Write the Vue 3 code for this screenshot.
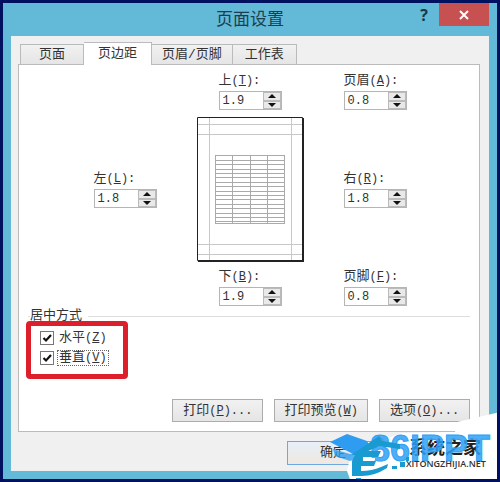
<script setup>
import { reactive, ref } from 'vue'

const tabs = ['页面', '页边距', '页眉/页脚', '工作表']
const activeTab = ref('页边距')

const margins = reactive([
  { id: 'top', name: '上', key: 'T', value: '1.9' },
  { id: 'header', name: '页眉', key: 'A', value: '0.8' },
  { id: 'left', name: '左', key: 'L', value: '1.8' },
  { id: 'right', name: '右', key: 'R', value: '1.8' },
  { id: 'bottom', name: '下', key: 'B', value: '1.9' },
  { id: 'footer', name: '页脚', key: 'F', value: '0.8' },
])

const centering = reactive([
  { id: 'horizontal', name: '水平', key: 'Z', checked: true, focused: false },
  { id: 'vertical', name: '垂直', key: 'V', checked: true, focused: true },
])

const actions = [
  { name: '打印', key: 'P', dots: '...' },
  { name: '打印预览', key: 'W', dots: '' },
  { name: '选项', key: 'O', dots: '...' },
]

function step(field, amount) {
  field.value = Math.max(0, Number(field.value) + amount).toFixed(1)
}
</script>

<template>
  <div class="window">
    <header class="title-bar">
      <h1 class="title">页面设置</h1>
      <button type="button" class="help" aria-label="帮助">?</button>
      <button type="button" class="close" aria-label="关闭">
        <svg width="12" height="12" viewBox="0 0 12 12" aria-hidden="true">
          <path d="M2 2 L10 10 M10 2 L2 10" stroke="#fff" stroke-width="2" />
        </svg>
      </button>
    </header>

    <main class="dialog">
      <nav class="tabs" role="tablist">
        <button
          v-for="tab in tabs"
          :key="tab"
          type="button"
          role="tab"
          class="tab"
          :class="{ 'tab--active': tab === activeTab }"
          :aria-selected="tab === activeTab"
          @click="activeTab = tab"
        >
          {{ tab }}
        </button>
      </nav>

      <section class="panel">
        <div class="margins">
          <div v-for="field in margins" :key="field.id" class="field" :class="`field--${field.id}`">
            <label class="field__label" :for="field.id">
              {{ field.name }}<span class="latin">(<u>{{ field.key }}</u>):</span>
            </label>
            <div class="spinner">
              <input :id="field.id" v-model="field.value" class="spinner__input" type="text" />
              <div class="spinner__buttons">
                <button type="button" class="spinner__button" aria-label="增加" @click="step(field, 0.1)">
                  <svg width="8" height="4" viewBox="0 0 8 4"><path d="M4 0 L8 4 H0 Z" /></svg>
                </button>
                <button type="button" class="spinner__button" aria-label="减少" @click="step(field, -0.1)">
                  <svg width="8" height="4" viewBox="0 0 8 4"><path d="M0 0 H8 L4 4 Z" /></svg>
                </button>
              </div>
            </div>
          </div>

          <!-- Page preview: paper, margin guides, sample table -->
          <svg class="preview" width="107" height="145" viewBox="0 0 107 145" aria-hidden="true">
            <path d="M0 0 H106 V144 H0 Z" fill="#fff" />
            <path
              d="M1 7.5 H105 M1 17.5 H105 M1 127.5 H105 M1 137.5 H105 M12.5 1 V143 M94.5 1 V143"
              stroke="#c8c8c8"
              fill="none"
            />
            <path d="M0.5 0.5 H105.5 V143.5 H0.5 Z" fill="none" stroke="#222" />
            <path d="M106 1 V144 H1" fill="none" stroke="#222" stroke-width="2" />
            <g fill="none" stroke="#aaa">
              <path v-for="n in 16" :key="n" :d="`M18 ${Math.round(34 + n * 4.4) + 0.5} H87`" />
              <path d="M18.5 38 V106 M35.5 38 V106 M53.5 38 V106 M70.5 38 V106 M87.5 38 V106 M18 106.5 H88" />
            </g>
          </svg>
        </div>

        <fieldset class="centering">
          <legend class="centering__title">居中方式</legend>
          <div class="centering__options">
            <label v-for="option in centering" :key="option.id" class="check">
              <input v-model="option.checked" class="check__box" type="checkbox" />
              <span class="check__text" :class="{ 'check__text--focused': option.focused }">
                {{ option.name }}<span class="latin">(<u>{{ option.key }}</u>)</span>
              </span>
            </label>
          </div>
        </fieldset>

        <div class="actions">
          <button v-for="action in actions" :key="action.key" type="button" class="action">
            {{ action.name }}<span class="latin">(<u>{{ action.key }}</u>){{ action.dots }}</span>
          </button>
        </div>
      </section>

      <footer class="footer">
        <button type="button" class="ok">确定</button>
      </footer>
    </main>

    <!-- Site watermark in the corner -->
    <svg class="watermark" width="175" height="75" viewBox="0 0 175 75" aria-hidden="true">
      <path d="M175 5 L132 15 L130 25 L76 26 L26 46 L22 64 L26 75 H175 Z" fill="#fff" />
      <text x="84" y="47" class="watermark__name">系统之家</text>
      <text x="45" y="54" class="watermark__brand">86IPPT</text>
      <text x="81" y="60" class="watermark__url">XITONGZHIJIA.NET</text>
      <g fill="#2e9cf0">
        <path d="M5 35 L22 27 L42 34 L46 41 L28 47 Z" />
        <path d="M8 42 L25 47 L42 42 L40 49 L25 54 L10 49 Z" opacity="0.8" />
      </g>
      <g fill="#199bd1">
        <path d="M25 49 L54 29 L58 34 L75 37 V42 L54 39 L35 48 H26 Z" />
        <path d="M32 44 H56 L53 50 H38 V54 H51 L49 59 H36 V64 Q47 64 56 60 L63 57 L62 61 Q48 70 34 69 H27 V54 Z" />
        <path d="M75 55 H80 V60 H75 Z M67 59 H72 V62 H67 Z M81 50 H84 V54 H81 Z M31 71 H36 V74 H31 Z" />
      </g>
      <path d="M40 51 H50 V53 H40 Z" fill="#fff" />
    </svg>

    <div class="highlight" aria-hidden="true" />
  </div>
</template>

<style>
body {
  margin: 0;
}
</style>

<style scoped>
.window {
  --sky: #62b9d8;
  position: relative;
  display: flex;
  flex-direction: column;
  box-sizing: border-box;
  min-height: 100vh;
  padding: 0 8px 8px;
  border: 3px solid #00125f;
  background: var(--sky);
  color: #333;
  font-family: 'Liberation Mono', 'Noto Sans CJK SC', sans-serif;
  font-size: 13px;
  line-height: 16px;
  overflow: hidden;
}

button {
  box-sizing: border-box;
  margin: 0;
  padding: 0;
  color: inherit;
  font: inherit;
}

.latin {
  font-size: 12px;
}

.title-bar {
  display: flex;
  align-items: flex-start;
  height: 33px;
}

.title {
  flex: 1;
  margin: 0;
  padding-left: 80px;
  color: #1d3f4d;
  font-size: 17px;
  font-weight: 400;
  line-height: 36px;
  text-align: center;
}

.help {
  width: 30px;
  height: 24px;
  border: none;
  background: none;
  color: #173844;
  font-family: 'Open Sans', sans-serif;
  font-size: 16px;
  font-weight: 700;
}

.close {
  display: flex;
  align-items: center;
  justify-content: center;
  width: 50px;
  height: 23px;
  border: none;
  background: #c75050;
}

.dialog {
  display: flex;
  flex: 1;
  flex-direction: column;
  padding: 6px 9px 0 7px;
  background: #f0f0f0;
}

.tabs {
  display: flex;
  align-items: flex-end;
  padding-left: 2px;
}

.tab {
  height: 20px;
  padding: 0 10px;
  border: 1px solid #bbb;
  border-bottom: none;
  border-left-width: 0;
  background: linear-gradient(#f1f1f1, #e5e5e5);
  line-height: 18px;
}

.tab:first-child {
  padding: 0 18px;
  border-left-width: 1px;
}

.tab:last-child {
  padding: 0 12px;
}

/* Taller than its neighbours and laid over the panel's top line */
.tab--active {
  position: relative;
  height: 23px;
  margin-bottom: -1px;
  padding: 0 14px;
  background: #fff;
}

.panel {
  flex: 1;
  padding: 8px 9px;
  border: 1px solid #bbb;
  background: #fff;
}

.margins {
  display: grid;
  grid-template-columns: 63px 107px 63px;
  grid-template-areas:
    '. top header'
    'left preview right'
    '. bottom footer';
  column-gap: 40px;
  row-gap: 7px;
  align-items: center;
  justify-content: center;
  justify-items: center;
  padding-left: 2px;
}

.preview {
  grid-area: preview;
  display: block;
}

.field {
  display: flex;
  flex-direction: column;
  gap: 2px;
  width: 63px;
}

.field--top {
  grid-area: top;
}

.field--header {
  grid-area: header;
}

.field--left {
  grid-area: left;
}

.field--right {
  grid-area: right;
}

.field--bottom {
  grid-area: bottom;
}

.field--footer {
  grid-area: footer;
}

.field__label {
  white-space: nowrap;
}

.spinner {
  display: flex;
  box-sizing: border-box;
  height: 19px;
  border: 1px solid #b5b5b5;
}

.spinner__input {
  flex: 1;
  min-width: 0;
  padding: 0 0 0 3px;
  border: none;
  outline: none;
  background: #fff;
  color: #333;
  font: inherit;
  font-size: 12px;
}

.spinner__buttons {
  display: flex;
  flex-direction: column;
  width: 18px;
}

.spinner__button {
  display: flex;
  flex: 1;
  align-items: center;
  justify-content: center;
  min-height: 0;
  border: 1px solid #bbb;
  background: #e9e9e9;
}

.spinner__button svg {
  flex-shrink: 0;
  fill: #111;
}

.centering {
  min-width: 0;
  margin: 2px 0 0;
  padding: 0 0 0 2px;
  border: none;
  border-top: 1px solid #ddd;
}

.centering__title {
  padding: 0 6px 0 0;
}

.centering__options {
  display: flex;
  flex-direction: column;
  align-items: flex-start;
  gap: 4px;
  padding: 6px 10px 0;
}

.check {
  display: flex;
  align-items: center;
  gap: 3px;
}

.check__box {
  box-sizing: border-box;
  width: 14px;
  height: 14px;
  margin: 0;
  border: 1px solid #777;
  background: #fff;
  appearance: none;
}

.check__box:checked {
  background: #fff url("data:image/svg+xml,%3Csvg xmlns='http://www.w3.org/2000/svg' viewBox='0 0 12 12'%3E%3Cpath d='M2.5 6 L5 8.5 L10 3' fill='none' stroke='%23111' stroke-width='2.2'/%3E%3C/svg%3E") center / 12px 12px no-repeat;
}

.check__text {
  box-sizing: border-box;
  height: 16px;
  padding: 0 1px;
  border: 1px solid transparent;
  line-height: 14px;
}

.check__text--focused {
  border: 1px dotted #666;
}

.actions {
  display: flex;
  justify-content: flex-end;
  gap: 11px;
  margin-top: 33px;
}

.action {
  min-width: 91px;
  height: 23px;
  padding: 0 9px;
  border: 1px solid #acacac;
  background: linear-gradient(#f1f1f1, #e5e5e5);
}

.footer {
  display: flex;
  justify-content: flex-end;
  padding: 9px 101px 6px 0;
}

.ok {
  width: 92px;
  height: 24px;
  border: 1px solid #6fa8e0;
  background: linear-gradient(#e6eff8, #f0e8e0);
}

.watermark {
  position: absolute;
  right: -3px;
  bottom: -3px;
}

.watermark__name {
  fill: #222;
  font-family: 'Noto Sans CJK SC', sans-serif;
  font-size: 18px;
  font-weight: 700;
}

.watermark__url {
  fill: #333;
  font-family: 'Open Sans', sans-serif;
  font-size: 9px;
  font-weight: 600;
}

.watermark__brand {
  fill: #2e9ff5;
  fill-opacity: 0.85;
  stroke: #2e9ff5;
  stroke-width: 1px;
  font-family: 'Liberation Sans', sans-serif;
  font-size: 36px;
  font-weight: 700;
}

/* Callout drawn over the centering options */
.highlight {
  position: absolute;
  top: 318px;
  left: 23px;
  box-sizing: border-box;
  width: 102px;
  height: 58px;
  border: 5px solid #dc1f2b;
  border-radius: 4px;
  pointer-events: none;
}
</style>
